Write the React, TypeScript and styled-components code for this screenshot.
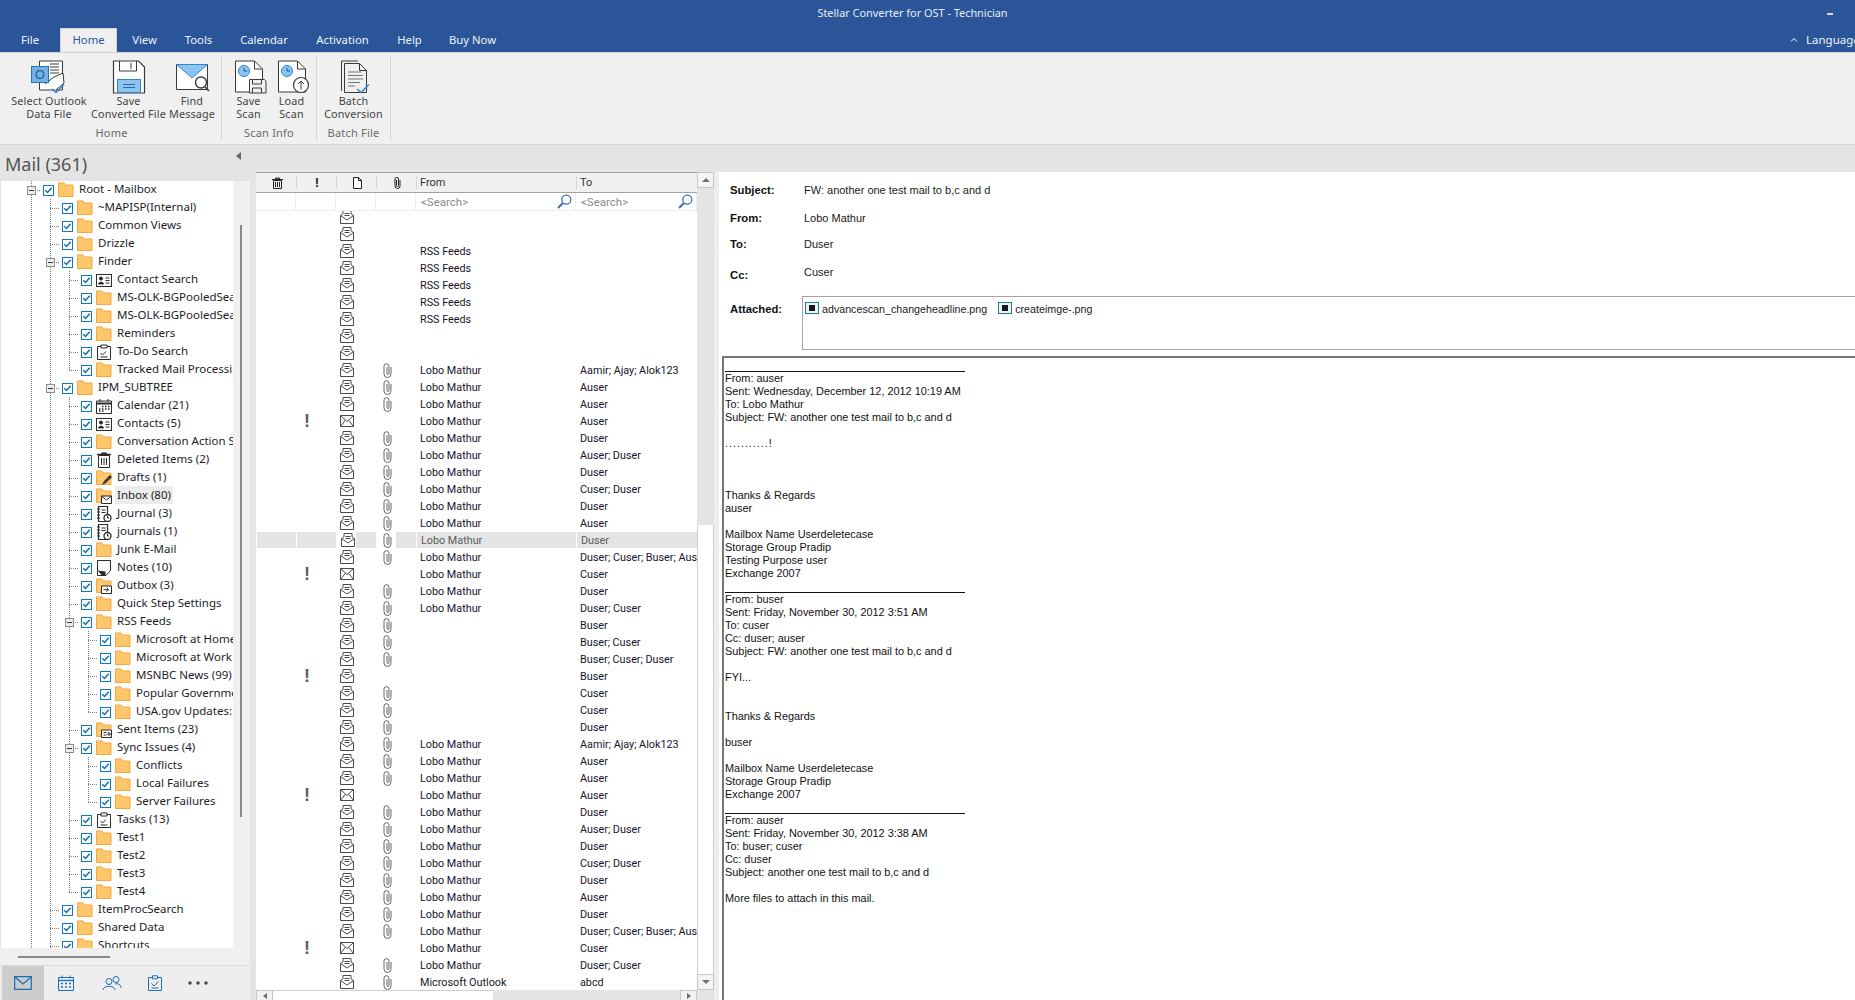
import React from 'react'
import styled, { createGlobalStyle } from 'styled-components'

const UI = `"Noto Sans", "Liberation Sans", sans-serif`
const GRID = `Roboto, "Liberation Sans", sans-serif`
const MSG = `"Liberation Sans", Arial, sans-serif`
const DOTS = '#7d7d7d'

const Global = createGlobalStyle`
  html, body { margin: 0; padding: 0; height: 100%; overflow: hidden; background: #e4e4e4; }
  #root { height: 100%; }
  * { box-sizing: border-box; }
`

const Shell = styled.div`
  display: flex;
  flex-direction: column;
  width: 1855px;
  height: 1000px;
  overflow: hidden;
  font-family: ${UI};
  font-size: 11.5px;
  color: #222;
`

const TitleBar = styled.div`
  position: relative;
  display: flex;
  align-items: center;
  justify-content: center;
  height: 28px;
  padding: 0 30px 3px 0;
  background: #2a5699;
  color: #e6ecf5;
  font-size: 10.9px;
`
const MinimizeGlyph = styled.span`
  position: absolute;
  right: 22px;
  top: 13px;
  width: 6px;
  height: 2px;
  background: #d5dbe6;
`

const TabBar = styled.div`
  position: relative;
  display: flex;
  height: 24px;
  background: #2a5699;
`
const Tab = styled.div<{ $w: number; $on?: boolean }>`
  width: ${p => p.$w}px;
  text-align: center;
  line-height: 24px;
  font-size: 11.3px;
  color: ${p => (p.$on ? '#2a5699' : '#eef2f8')};
  background: ${p => (p.$on ? '#f0f0f0' : 'transparent')};
  ${p => p.$on && 'border: 1px solid #d4d4d4; border-bottom: 0; line-height: 22px;'}
`
const LanguageBox = styled.div`
  position: absolute;
  left: 1790px;
  top: 0;
  display: flex;
  align-items: center;
  gap: 8px;
  height: 22px;
  color: #eef2f8;
  white-space: nowrap;
  font-size: 11.5px;
`

const Ribbon = styled.div`
  display: flex;
  height: 93px;
  flex: none;
  padding: 3px 0 3px 2px;
  background: #f0f0f0;
  border-top: 1px solid #d0d0d0;
  border-bottom: 1px solid #d4d4d4;
`
const RibbonGroup = styled.div<{ $w: number }>`
  display: flex;
  flex-direction: column;
  width: ${p => p.$w}px;
  border-right: 1px solid #d6d6d6;
`
const RibbonButtons = styled.div`
  display: flex;
  flex: 1;
`
const RibbonButton = styled.div<{ $w: number }>`
  display: flex;
  flex-direction: column;
  align-items: center;
  flex: none;
  width: ${p => p.$w}px;
  padding-top: 4px;
  line-height: 13px;
  font-size: 10.8px;
  letter-spacing: 0.15px;
  color: #444;
  text-align: center;
  white-space: nowrap;
`
const RibbonIcon = styled.svg`
  display: block;
  flex: none;
  width: 36px;
  height: 34px;
`
const GroupLabel = styled.div`
  height: 17px;
  padding-top: 1px;
  text-align: center;
  font-size: 11px;
  letter-spacing: 0.2px;
  color: #6a6a6a;
`

const Main = styled.div`
  display: grid;
  grid-template-columns: 250px 6px 463px 1fr;
  flex: 1;
  min-height: 0;
  background: #e4e4e4;
`

const LeftPane = styled.div`
  display: flex;
  flex-direction: column;
  min-height: 0;
`
const MailHeader = styled.div`
  position: relative;
  flex: none;
  height: 36px;
  padding-left: 5px;
  line-height: 38px;
  font-size: 18px;
  color: #555;
`
const CollapseArrow = styled.span`
  position: absolute;
  left: 236px;
  top: 7px;
  width: 0;
  height: 0;
  border-style: solid;
  border-width: 4px 5px 4px 0;
  border-color: transparent #666 transparent transparent;
`
const TreeArea = styled.div`
  display: flex;
  flex: 1;
  min-height: 0;
  padding-left: 1px;
`
const Tree = styled.div`
  flex: none;
  width: 232px;
  overflow: hidden;
  background: #fff;
`
const TreeScroll = styled.div`
  flex: 1;
  display: flex;
  justify-content: center;
  background: #f0f0f0;
  padding-right: 2px;
`
const TreeThumb = styled.div`
  width: 2px;
  height: 592px;
  margin-top: 44px;
  background: #8a8a8a;
`
const TreeHScroll = styled.div`
  flex: none;
  display: flex;
  align-items: center;
  height: 17px;
  padding-left: 18px;
  background: #f0f0f0;
`
const TreeHThumb = styled.div`
  width: 92px;
  height: 2px;
  background: #8a8a8a;
`
const NavBar = styled.div`
  flex: none;
  display: flex;
  height: 35px;
  padding-left: 2px;
  background: #eeeeee;
  border-top: 1px solid #dadada;
`
const NavItem = styled.div<{ $w: number; $on?: boolean }>`
  display: flex;
  align-items: center;
  justify-content: center;
  width: ${p => p.$w}px;
  background: ${p => (p.$on ? '#cccccc' : 'transparent')};
`

const TreeRowBox = styled.div`
  display: flex;
  align-items: center;
  height: 18px;
  padding-left: 21px;
  white-space: nowrap;
`
const Guide = styled.span<{ $kind: 'line' | 'mid' | 'end' }>`
  display: flex;
  align-items: center;
  justify-content: center;
  flex: none;
  width: 19px;
  height: 18px;
  background-repeat: no-repeat;
  background-image:
    repeating-linear-gradient(to bottom, ${DOTS} 0 1px, transparent 1px 2px)
    ${p => (p.$kind === 'line' ? '' : `, repeating-linear-gradient(to right, ${DOTS} 0 1px, transparent 1px 2px)`)};
  background-size: 1px ${p => (p.$kind === 'end' ? '9px' : '18px')} ${p => (p.$kind === 'line' ? '' : ', 10px 1px')};
  background-position: 9px 0 ${p => (p.$kind === 'line' ? '' : ', 9px 9px')};
`
const Expander = styled.span`
  display: flex;
  align-items: center;
  justify-content: center;
  width: 9px;
  height: 9px;
  background: #ececec;
  border: 1px solid #8d8d8d;
  &::before {
    content: '';
    width: 5px;
    height: 1px;
    background: #333;
  }
`
const CheckBox = styled.span`
  display: flex;
  flex: none;
  width: 11px;
  height: 11px;
  margin: 0 4px 0 2px;
  background: #fff;
  border: 1px solid #0f78c2;
`
const TreeIconSvg = styled.svg`
  display: block;
  flex: none;
  width: 16px;
  height: 16px;
`
const TreeLabel = styled.span<{ $on?: boolean }>`
  margin: -2px 0 0 3px;
  padding: 0 2px;
  line-height: 18px;
  font-size: 11.5px;
  color: #1c1c28;
  background: ${p => (p.$on ? '#ececec' : 'transparent')};
`

const MiddleColumn = styled.div`
  display: flex;
  flex-direction: column;
  margin-top: 27px;
  padding-right: 5px;
  min-height: 0;
  background: #eeeeee;
`
const ListTop = styled.div`
  display: flex;
  flex: 1;
  min-height: 0;
`
const List = styled.div`
  display: flex;
  flex-direction: column;
  flex: none;
  width: 441px;
  background: #fff;
  font-family: ${GRID};
`
const Columns = `grid-template-columns: 40px 40px 40px 40px 160px 121px;`
const HeaderRow = styled.div`
  display: grid;
  ${Columns}
  flex: none;
  height: 21px;
  background: #f0f0f0;
  border-top: 1px solid #a3a3a3;
  border-bottom: 1px solid #a3a3a3;
`
const HeaderCell = styled.div<{ $text?: boolean }>`
  display: flex;
  align-items: center;
  justify-content: ${p => (p.$text ? 'flex-start' : 'center')};
  height: 19px;
  padding: ${p => (p.$text ? '0 0 0 4px' : '0 0 0 2px')};
  font-size: 11px;
  color: #333;
  & + & {
    background: linear-gradient(#d6d6d6, #d6d6d6) no-repeat 0 3px / 1px 13px;
  }
`
const HeaderBang = styled.span`
  font-family: ${MSG};
  font-weight: bold;
  font-size: 13px;
  color: #222;
`
const SearchRow = styled.div`
  display: grid;
  ${Columns}
  flex: none;
  height: 18px;
  border-bottom: 1px solid #ededed;
`
const SearchCell = styled.div`
  display: flex;
  align-items: center;
  justify-content: space-between;
  padding: 0 3px 0 5px;
  font-size: 11.5px;
  color: #8b8b8b;
  border-right: 1px solid #ededed;
`
const Rows = styled.div`
  flex: 1;
  min-height: 0;
  overflow: hidden;
`
const RowsInner = styled.div`
  margin-top: -2px;
`
const Row = styled.div<{ $on?: boolean }>`
  display: grid;
  ${Columns}
  height: 17px;
  line-height: 17px;
  font-size: 10.8px;
  color: ${p => (p.$on ? '#5a5a5a' : '#14142a')};
`
const Cell = styled.div<{ $on?: boolean; $text?: boolean; $icon?: boolean }>`
  display: flex;
  align-items: center;
  justify-content: center;
  height: 16px;
  overflow: hidden;
  white-space: nowrap;
  ${p => p.$text && 'justify-content: flex-start; padding-left: 4px;'}
  ${p => !p.$text && 'padding-right: 18px;'}
  ${p => p.$on && 'background: #e4e4e4; border-left: 1px solid #fff;'}
  ${p => p.$on && p.$icon && 'background: linear-gradient(#fff, #fff) no-repeat 0 0 / 19px 100%, #e4e4e4;'}
`
const Bang = styled.span`
  font-family: ${MSG};
  font-weight: bold;
  font-size: 18px;
  line-height: 16px;
  color: #5c5c5c;
`

const VScroll = styled.div`
  display: flex;
  flex-direction: column;
  flex: none;
  width: 17px;
  background: #e4e4e4;
`
const ScrollButton = styled.div`
  display: flex;
  align-items: center;
  justify-content: center;
  flex: none;
  width: 17px;
  height: 16px;
  background: #f4f4f4;
  border: 1px solid #c6c6c6;
`
const ArrowUp = styled.span`
  border-style: solid;
  border-width: 0 4px 4px 4px;
  border-color: transparent transparent #6e6e6e transparent;
`
const ArrowDown = styled.span`
  border-style: solid;
  border-width: 4px 4px 0 4px;
  border-color: #6e6e6e transparent transparent transparent;
`
const VThumb = styled.div`
  flex: 1;
  margin-top: 337px;
  background: #fff;
  border-left: 1px solid #cfcfcf;
  border-right: 1px solid #cfcfcf;
`
const Spacer = styled.div`
  flex: 1;
`
const HScroll = styled.div`
  display: flex;
  flex: none;
  width: 458px;
  height: 10px;
  padding-right: 17px;
  background: #e4e4e4;
  overflow: hidden;
`
const HButton = styled.div`
  display: flex;
  align-items: center;
  justify-content: center;
  flex: none;
  width: 17px;
  height: 10px;
  background: #f2f2f2;
  border: 1px solid #c6c6c6;
  border-bottom: 0;
`
const ArrowLeft = styled.span`
  border-style: solid;
  border-width: 3px 4px 3px 0;
  border-color: transparent #6e6e6e transparent transparent;
`
const ArrowRight = styled.span`
  border-style: solid;
  border-width: 3px 0 3px 4px;
  border-color: transparent transparent transparent #6e6e6e;
`
const HThumb = styled.div`
  flex: none;
  width: 220px;
  background: #fff;
  border-top: 1px solid #cfcfcf;
`

const RightPane = styled.div`
  display: flex;
  flex-direction: column;
  min-width: 0;
  margin-top: 27px;
  overflow: hidden;
  background: #fff;
  font-family: ${MSG};
  font-size: 11px;
  color: #1a1a1a;
`
const MetaRow = styled.div<{ $h: number }>`
  display: flex;
  align-items: center;
  flex: none;
  height: ${p => p.$h}px;
  padding-left: 11px;
`
const MetaLabel = styled.div<{ $low?: boolean }>`
  flex: none;
  width: 74px;
  font-weight: bold;
  font-size: 11.3px;
  color: #111;
  ${p => p.$low && 'padding-top: 6px;'}
`
const AttachRow = styled.div`
  display: flex;
  flex: none;
  height: 54px;
  margin: 12px -10px 0 0;
  padding-left: 11px;
`
const AttachLabel = styled(MetaLabel)`
  width: 72px;
  padding-top: 7px;
`
const AttachBox = styled.div`
  display: flex;
  flex: 1;
  gap: 11px;
  padding: 4px 0 0 2px;
  border: 1px solid #a3a3a3;
`
const Attachment = styled.div`
  display: flex;
  align-items: flex-start;
  gap: 3px;
  height: 16px;
  line-height: 16px;
  font-size: 10.7px;
`
const FileIcon = styled.span`
  display: flex;
  align-items: center;
  justify-content: center;
  flex: none;
  width: 14px;
  height: 12px;
  margin-top: 1px;
  background: #eaf3f3;
  border: 1px solid #1f7f83;
  &::before {
    content: '';
    width: 6px;
    height: 6px;
    background: #1b1320;
  }
`
const Preview = styled.div`
  flex: 1;
  margin: 6px -10px 0 3px;
  padding: 1px 0 0 1px;
  min-height: 0;
  overflow: hidden;
  border-top: 2px solid #777;
  border-left: 2px solid #777;
`
const MailRule = styled.div`
  width: 240px;
  height: 13px;
  border-bottom: 1px solid #111;
`
const MailText = styled.div`
  white-space: pre-line;
  line-height: 13px;
  font-size: 10.9px;
  color: #111;
`
const LooseDots = styled.span`
  letter-spacing: 0.95px;
`

type IconKind =
  | 'folder' | 'contact' | 'todo' | 'calendar' | 'trash' | 'drafts'
  | 'inbox' | 'journal' | 'note' | 'outbox' | 'sent'

const folderPath = 'M.5 3.5V.9h5.3l2 2.1h7.2v11.5H.5z'
const FolderShape = () => <path d={folderPath} fill="#fec76b" stroke="#f4a63f" />

const TreeIcon = ({ kind }: { kind: IconKind }) => {
  const k = '#2b2b2b'
  return (
    <TreeIconSvg viewBox="0 0 16 16">
      {kind === 'folder' && <FolderShape />}
      {kind === 'contact' && (
        <g fill="none" stroke={k}>
          <rect x=".5" y="2.5" width="15" height="12" />
          <circle cx="5" cy="6.5" r="1.6" fill={k} />
          <path d="M2.5 12c0-2.4 5-2.4 5 0z" fill={k} />
          <path d="M9.5 6h4M9.5 8.5h4M9.5 11h4" />
        </g>
      )}
      {kind === 'todo' && (
        <g fill="none" stroke={k}>
          <path d="M1.5 2.5h13v13h-13z" />
          <path d="M5 1h6v3H5z" fill="#fff" />
          <path d="M4.5 9l2 2 3.5-3.5M4.5 13h7" />
        </g>
      )}
      {kind === 'calendar' && (
        <g fill="none" stroke={k}>
          <path d="M.5 3h15v12.5H.5z" />
          <path d="M.5 5.5h15" strokeWidth="2" />
          <path d="M4 1v3M12 1v3" />
          <path d="M6 8.5h1.5M9 8.5h1.500M12 8.500h1.500M3 11h1.500M6 11h1.500M9 11h1.500M12 11h1.500M3 13h1.500M6 13h1.500" strokeWidth="1.400" />
        </g>
      )}
      {kind === 'trash' && (
        <g fill="none" stroke={k}>
          <path d="M2.500 3.500h11v12h-11z" />
          <path d="M1 2.500h14" strokeWidth="1.400" />
          <path d="M5.500 1h5v1.500h-5z" fill={k} />
          <path d="M5.500 6v7M8 6v7M10.500 6v7" />
        </g>
      )}
      {kind === 'drafts' && (
        <g>
          <FolderShape />
          <path d="M6 15l2-4 6-6 2 2-6 6z" fill="#3a3a3a" />
        </g>
      )}
      {kind === 'inbox' && (
        <g>
          <FolderShape />
          <path d="M5.500 8h10v7.500h-10z" fill="#fff" stroke={k} />
          <path d="M5.500 8l5 4 5-4" fill="none" stroke={k} />
        </g>
      )}
      {kind === 'journal' && (
        <g fill="none" stroke={k}>
          <path d="M2.500 .5h9v15h-9z" strokeWidth="1.200" />
          <path d="M1 3h3M1 6h3M1 9h3M1 12h3M5.500 4h4M5.500 6.500h4" />
          <circle cx="11.500" cy="12" r="3.500" fill="#fff" strokeWidth="1.300" />
          <path d="M11.500 10v2h1.500" />
        </g>
      )}
      {kind === 'note' && (
        <g>
          <path d="M1.500 .5h13v10l-4.500 5H1.500z" fill="#fff" stroke={k} />
          <path d="M1.500 10.500l8 1v4H6z" fill="#2b2b2b" />
        </g>
      )}
      {kind === 'outbox' && (
        <g>
          <FolderShape />
          <path d="M5.500 8h10v7.500h-10z" fill="#fff" stroke={k} />
          <path d="M7.500 11.700h5M10.500 9.700l2 2-2 2" fill="none" stroke={k} />
        </g>
      )}
      {kind === 'sent' && (
        <g>
          <FolderShape />
          <path d="M5.500 8h10v7.500h-10z" fill="#fff" stroke={k} />
          <path d="M7.500 10.500h3M7.500 13h3M12 11h2v2h-2z" fill="none" stroke={k} />
        </g>
      )}
    </TreeIconSvg>
  )
}

type TreeItem = {
  label: string
  depth: number
  icon?: IconKind
  exp?: boolean
  last?: boolean
  on?: boolean
}

const treeItems: TreeItem[] = [
  { label: 'Root - Mailbox', depth: 0, exp: true },
  { label: '~MAPISP(Internal)', depth: 1 },
  { label: 'Common Views', depth: 1 },
  { label: 'Drizzle', depth: 1 },
  { label: 'Finder', depth: 1, exp: true },
  { label: 'Contact Search', depth: 2, icon: 'contact' },
  { label: 'MS-OLK-BGPooledSearch', depth: 2 },
  { label: 'MS-OLK-BGPooledSearch', depth: 2 },
  { label: 'Reminders', depth: 2 },
  { label: 'To-Do Search', depth: 2, icon: 'todo' },
  { label: 'Tracked Mail Processing', depth: 2, last: true },
  { label: 'IPM_SUBTREE', depth: 1, exp: true },
  { label: 'Calendar (21)', depth: 2, icon: 'calendar' },
  { label: 'Contacts (5)', depth: 2, icon: 'contact' },
  { label: 'Conversation Action Settings', depth: 2 },
  { label: 'Deleted Items (2)', depth: 2, icon: 'trash' },
  { label: 'Drafts (1)', depth: 2, icon: 'drafts' },
  { label: 'Inbox (80)', depth: 2, icon: 'inbox', on: true },
  { label: 'Journal (3)', depth: 2, icon: 'journal' },
  { label: 'journals (1)', depth: 2, icon: 'journal' },
  { label: 'Junk E-Mail', depth: 2 },
  { label: 'Notes (10)', depth: 2, icon: 'note' },
  { label: 'Outbox (3)', depth: 2, icon: 'outbox' },
  { label: 'Quick Step Settings', depth: 2 },
  { label: 'RSS Feeds', depth: 2, exp: true },
  { label: 'Microsoft at Home', depth: 3 },
  { label: 'Microsoft at Work', depth: 3 },
  { label: 'MSNBC News (99)', depth: 3 },
  { label: 'Popular Government', depth: 3 },
  { label: 'USA.gov Updates:', depth: 3, last: true },
  { label: 'Sent Items (23)', depth: 2, icon: 'sent' },
  { label: 'Sync Issues (4)', depth: 2, exp: true },
  { label: 'Conflicts', depth: 3 },
  { label: 'Local Failures', depth: 3 },
  { label: 'Server Failures', depth: 3, last: true },
  { label: 'Tasks (13)', depth: 2, icon: 'todo' },
  { label: 'Test1', depth: 2 },
  { label: 'Test2', depth: 2 },
  { label: 'Test3', depth: 2 },
  { label: 'Test4', depth: 2, last: true },
  { label: 'ItemProcSearch', depth: 1 },
  { label: 'Shared Data', depth: 1 },
  { label: 'Shortcuts', depth: 1 },
]

const TreeRow = ({ item }: { item: TreeItem }) => (
  <TreeRowBox>
    {Array.from({ length: item.depth }, (_, i) => (
      <Guide key={i} $kind="line" />
    ))}
    <Guide $kind={item.last ? 'end' : 'mid'}>{item.exp && <Expander />}</Guide>
    <CheckBox>
      <svg viewBox="0 0 9 9" width="9" height="9">
        <path d="M1.300 4.300l2.200 2.200 4.200-4.700" fill="none" stroke="#0f6db5" strokeWidth="1.500" />
      </svg>
    </CheckBox>
    <TreeIcon kind={item.icon ?? 'folder'} />
    <TreeLabel $on={item.on}>{item.label}</TreeLabel>
  </TreeRowBox>
)

type MailRow = { from?: string; to?: string; clip?: boolean; bang?: boolean; closed?: boolean; on?: boolean }

const L = 'Lobo Mathur'
const mailRows: MailRow[] = [
  {}, {},
  { from: 'RSS Feeds' }, { from: 'RSS Feeds' }, { from: 'RSS Feeds' }, { from: 'RSS Feeds' }, { from: 'RSS Feeds' },
  {}, {},
  { from: L, to: 'Aamir; Ajay; Alok123', clip: true },
  { from: L, to: 'Auser', clip: true },
  { from: L, to: 'Auser', clip: true },
  { from: L, to: 'Auser', bang: true, closed: true },
  { from: L, to: 'Duser', clip: true },
  { from: L, to: 'Auser; Duser', clip: true },
  { from: L, to: 'Duser', clip: true },
  { from: L, to: 'Cuser; Duser', clip: true },
  { from: L, to: 'Duser', clip: true },
  { from: L, to: 'Auser', clip: true },
  { from: L, to: 'Duser', clip: true, on: true },
  { from: L, to: 'Duser; Cuser; Buser; Auser', clip: true },
  { from: L, to: 'Cuser', bang: true, closed: true },
  { from: L, to: 'Duser', clip: true },
  { from: L, to: 'Duser; Cuser', clip: true },
  { to: 'Buser', clip: true },
  { to: 'Buser; Cuser', clip: true },
  { to: 'Buser; Cuser; Duser', clip: true },
  { to: 'Buser', bang: true },
  { to: 'Cuser', clip: true },
  { to: 'Cuser', clip: true },
  { to: 'Duser', clip: true },
  { from: L, to: 'Aamir; Ajay; Alok123', clip: true },
  { from: L, to: 'Auser', clip: true },
  { from: L, to: 'Auser', clip: true },
  { from: L, to: 'Auser', bang: true, closed: true },
  { from: L, to: 'Duser', clip: true },
  { from: L, to: 'Auser; Duser', clip: true },
  { from: L, to: 'Duser', clip: true },
  { from: L, to: 'Cuser; Duser', clip: true },
  { from: L, to: 'Duser', clip: true },
  { from: L, to: 'Auser', clip: true },
  { from: L, to: 'Duser', clip: true },
  { from: L, to: 'Duser; Cuser; Buser; Auser', clip: true },
  { from: L, to: 'Cuser', bang: true, closed: true },
  { from: L, to: 'Duser; Cuser', clip: true },
  { from: 'Microsoft Outlook', to: 'abcd', clip: true },
]

const OpenMail = () => (
  <svg viewBox="0 0 14 14" width="14" height="14" fill="none" stroke="#4a4a4a">
    <path d="M.5 5.500L3 3.800V.5h8v3.300l2.500 1.700v8H.5z" fill="#fff" />
    <path d="M.5 5.500L7 10l6.500-4.500M4.500 3.500h5M4.500 5.500h5" />
  </svg>
)
const ClosedMail = () => (
  <svg viewBox="0 0 14 14" width="14" height="14" fill="none" stroke="#4a4a4a">
    <path d="M.5 1.500h13v11H.5z" />
    <path d="M.5 1.500L7 7.500l6.500-6M.5 12.500L5.300 6.300M13.500 12.500L8.700 6.300" />
  </svg>
)
const Clip = () => (
  <svg viewBox="0 0 9 15" width="9" height="15" fill="none" stroke="#666">
    <path d="M8 4v6.800a3.500 3.700 0 0 1-7 0V3.200a2.500 2.500 0 0 1 5 0v7.300a1 1 0 0 1-2 0V4" />
  </svg>
)
const SearchGlass = () => (
  <svg viewBox="0 0 15 15" width="15" height="15" fill="none" stroke="#3f6fb3" strokeWidth="1.300">
    <circle cx="9.300" cy="5.700" r="4.500" />
    <path d="M6 9L1 14" strokeWidth="2" />
  </svg>
)

const MailRowView = ({ row }: { row: MailRow }) => (
  <Row $on={row.on}>
    <Cell $on={row.on} />
    <Cell $on={row.on}>{row.bang && <Bang>!</Bang>}</Cell>
    <Cell $on={row.on} $icon>{row.closed ? <ClosedMail /> : <OpenMail />}</Cell>
    <Cell $on={row.on} $icon>{row.clip && <Clip />}</Cell>
    <Cell $on={row.on} $text>{row.from}</Cell>
    <Cell $on={row.on} $text>{row.to}</Cell>
  </Row>
)

const mailOneHead = `From: auser
Sent: Wednesday, December 12, 2012 10:19 AM
To: Lobo Mathur
Subject: FW: another one test mail to b,c and d
\u00a0`

const mailOneTail = `\u00a0
\u00a0
\u00a0
Thanks & Regards
auser
\u00a0
Mailbox Name Userdeletecase
Storage Group Pradip
Testing Purpose user
Exchange 2007`

const mailTwo = `From: buser
Sent: Friday, November 30, 2012 3:51 AM
To: cuser
Cc: duser; auser
Subject: FW: another one test mail to b,c and d
\u00a0
FYI...
\u00a0
\u00a0
Thanks & Regards
\u00a0
buser
\u00a0
Mailbox Name Userdeletecase
Storage Group Pradip
Exchange 2007`

const mailThree = `From: auser
Sent: Friday, November 30, 2012 3:38 AM
To: buser; cuser
Cc: duser
Subject: another one test mail to b,c and d
\u00a0
More files to attach in this mail.`

const ink = '#3a3a3a'
const sky = '#8cc4ee'
const blue = '#2f86d0'

export default function App() {
  return (
    <Shell>
      <Global />
      <TitleBar>
        Stellar Converter for OST - Technician
        <MinimizeGlyph />
      </TitleBar>
      <TabBar>
        <Tab $w={60}>File</Tab>
        <Tab $w={57} $on>Home</Tab>
        <Tab $w={55}>View</Tab>
        <Tab $w={53}>Tools</Tab>
        <Tab $w={78}>Calendar</Tab>
        <Tab $w={79}>Activation</Tab>
        <Tab $w={55}>Help</Tab>
        <Tab $w={71}>Buy Now</Tab>
        <LanguageBox>
          <svg viewBox="0 0 8 5" width="8" height="5" fill="none" stroke="#fff">
            <path d="M1 4.500L4 1.500l3 3" />
          </svg>
          Language
        </LanguageBox>
      </TabBar>

      <Ribbon>
        <RibbonGroup $w={220}>
          <RibbonButtons>
            <RibbonButton $w={94}>
              <RibbonIcon viewBox="0 0 36 34">
                <path d="M8.500 12V1h23v29H8.500z" fill="#fff" stroke={ink} />
                <path d="M19 4h9M19 7h9M19 10h9M19 13h9" stroke={ink} />
                <path d="M14 24l9-7 9-4 1 10-8 7" fill="#fff" stroke={ink} />
                <rect x=".5" y="6.500" width="17" height="16" fill="#77b1e3" stroke="#1f76bf" />
                <text x="9" y="19" fontFamily={UI} fontSize="13" textAnchor="middle" fill="#0f5c9e">O</text>
                <path d="M21 29l4 3.500 8-8" fill="none" stroke={blue} strokeWidth="1.400" />
              </RibbonIcon>
              Select Outlook<br />Data File
            </RibbonButton>
            <RibbonButton $w={65}>
              <RibbonIcon viewBox="0 0 36 34">
                <path d="M2.500 1h25l6 6v26h-31z" fill="#fff" stroke={ink} strokeWidth="1.200" />
                <path d="M8.500 1v10h17V1M20 3v6" fill="none" stroke={ink} />
                <rect x="6.500" y="19.500" width="23" height="13" fill={sky} stroke={blue} />
                <path d="M12 24.500h12M12 27.500h12" stroke="#2a6ea8" />
              </RibbonIcon>
              Save<br />Converted File
            </RibbonButton>
            <RibbonButton $w={62}>
              <RibbonIcon viewBox="0 0 36 34">
                <path d="M2.500 4.500h31v25h-31z" fill="#fff" stroke={ink} />
                <path d="M2.500 4.500h31L18 18z" fill={sky} stroke={blue} />
                <circle cx="27" cy="22.500" r="5.500" fill="#fff" stroke={ink} strokeWidth="1.400" />
                <path d="M31 27l4 4" stroke={ink} strokeWidth="1.600" />
              </RibbonIcon>
              Find<br />Message
            </RibbonButton>
          </RibbonButtons>
          <GroupLabel>Home</GroupLabel>
        </RibbonGroup>
        <RibbonGroup $w={95}>
          <RibbonButtons>
            <RibbonButton $w={53}>
              <RibbonIcon viewBox="0 0 36 34">
                <path d="M4.500 1h19l8 8v23h-27z" fill="#fff" stroke={ink} />
                <path d="M23.500 1v8h8" fill="none" stroke={ink} />
                <circle cx="13" cy="11" r="5.500" fill={sky} stroke={blue} />
                <path d="M13 8v3h3" fill="none" stroke="#14578f" />
                <path d="M18.500 19.500h15l1.500 1.500v12h-16.500z" fill="#f0f0f0" stroke={ink} />
                <path d="M21.500 20v4h9v-4M21.500 33v-5h9v5" fill="none" stroke={ink} />
              </RibbonIcon>
              Save<br />Scan
            </RibbonButton>
            <RibbonButton $w={33}>
              <RibbonIcon viewBox="0 0 36 34">
                <path d="M4.500 1h19l8 8v23h-27z" fill="#fff" stroke={ink} />
                <path d="M23.500 1v8h8" fill="none" stroke={ink} />
                <circle cx="13" cy="11" r="5.500" fill={sky} stroke={blue} />
                <path d="M13 8v3h3" fill="none" stroke="#14578f" />
                <circle cx="27" cy="25" r="7.500" fill="#fff" stroke={ink} strokeWidth="1.200" />
                <path d="M27 29.500v-8M24 24l3-3 3 3" fill="none" stroke={ink} />
              </RibbonIcon>
              Load<br />Scan
            </RibbonButton>
          </RibbonButtons>
          <GroupLabel>Scan Info</GroupLabel>
        </RibbonGroup>
        <RibbonGroup $w={74}>
          <RibbonButtons>
            <RibbonButton $w={73}>
              <RibbonIcon viewBox="0 0 36 34">
                <path d="M5.500 31V1H22" fill="none" stroke={ink} />
                <path d="M8.500 3.500h15l7 7v22h-22z" fill="#f0f0f0" stroke={ink} />
                <path d="M23.500 3.500v7h7" fill="none" stroke={ink} />
                <path d="M12 12h13M12 15.500h15M12 19h15M12 22.500h12M12 26h7" stroke="#777" />
                <path d="M21 29l4 3.500 8-8" fill="none" stroke={blue} strokeWidth="1.500" />
              </RibbonIcon>
              Batch<br />Conversion
            </RibbonButton>
          </RibbonButtons>
          <GroupLabel>Batch File</GroupLabel>
        </RibbonGroup>
      </Ribbon>

      <Main>
        <LeftPane>
          <MailHeader>
            Mail (361)
            <CollapseArrow />
          </MailHeader>
          <TreeArea>
            <Tree>
              {treeItems.map((item, i) => (
                <TreeRow key={i} item={item} />
              ))}
            </Tree>
            <TreeScroll>
              <TreeThumb />
            </TreeScroll>
          </TreeArea>
          <TreeHScroll>
            <TreeHThumb />
          </TreeHScroll>
          <NavBar>
            <NavItem $w={42} $on>
              <svg viewBox="0 0 18 14" width="18" height="14" fill="none" stroke="#1c6db3" strokeWidth="1.200">
                <path d="M.7.7h16.600v12.600H.7z" />
                <path d="M.7.7L9 8l8.300-7.300" />
              </svg>
            </NavItem>
            <NavItem $w={44}>
              <svg viewBox="0 0 16 16" width="16" height="16" fill="none" stroke="#1c6db3">
                <path d="M.5 2.500h15v13H.5z" />
                <path d="M.5 5.500h15" strokeWidth="1.400" />
                <path d="M4 .5v3M12 .5v3" />
                <path d="M3 8.500h2M7 8.500h2M11 8.500h2M3 12h2M7 12h2M11 12h2" strokeWidth="1.600" />
              </svg>
            </NavItem>
            <NavItem $w={48}>
              <svg viewBox="0 0 20 15" width="20" height="15" fill="none" stroke="#1c6db3">
                <circle cx="7" cy="5.500" r="3" />
                <path d="M1 14c0-5 12-5 12 0" />
                <circle cx="14" cy="3.500" r="3" />
                <path d="M13 8c3-1 6 .5 6 4" />
              </svg>
            </NavItem>
            <NavItem $w={38}>
              <svg viewBox="0 0 14 16" width="14" height="16" fill="none" stroke="#1c6db3">
                <path d="M.5 2.500h13v13H.5z" />
                <path d="M4.500.8h5v3h-5z" fill="#eee" />
                <path d="M3.500 8.500l2.500 2.500 4.500-4.500M3.500 13h7" />
              </svg>
            </NavItem>
            <NavItem $w={48}>
              <svg viewBox="0 0 20 4" width="20" height="4" fill="#4f4f4f">
                <circle cx="2" cy="2" r="1.800" />
                <circle cx="10" cy="2" r="1.800" />
                <circle cx="18" cy="2" r="1.800" />
              </svg>
            </NavItem>
          </NavBar>
        </LeftPane>

        <div />

        <MiddleColumn>
          <ListTop>
            <List>
              <HeaderRow>
                <HeaderCell>
                  <svg viewBox="0 0 11 12" width="11" height="12" fill="none" stroke="#222">
                    <path d="M1.500 3.500h8v8h-8z" />
                    <path d="M0 2.500h11M3.500 1h4v1h-4z" />
                    <path d="M3.500 5v5M5.500 5v5M7.500 5v5" />
                  </svg>
                </HeaderCell>
                <HeaderCell><HeaderBang>!</HeaderBang></HeaderCell>
                <HeaderCell>
                  <svg viewBox="0 0 9 12" width="9" height="12" fill="#fff" stroke="#222">
                    <path d="M.5.5h5l3 3v8h-8zM5.500.5v3h3" />
                  </svg>
                </HeaderCell>
                <HeaderCell>
                  <svg viewBox="0 0 7 12" width="7" height="12" fill="none" stroke="#222">
                    <path d="M2.500 3v5.500a1 1 0 0 0 2 0V2a1.500 1.500 0 0 0-3.500 0v7a2.500 2.500 0 0 0 5 0V3" />
                  </svg>
                </HeaderCell>
                <HeaderCell $text>From</HeaderCell>
                <HeaderCell $text>To</HeaderCell>
              </HeaderRow>
              <SearchRow>
                <SearchCell />
                <SearchCell />
                <SearchCell />
                <SearchCell />
                <SearchCell>&lt;Search&gt;<SearchGlass /></SearchCell>
                <SearchCell>&lt;Search&gt;<SearchGlass /></SearchCell>
              </SearchRow>
              <Rows>
                <RowsInner>
                  {mailRows.map((row, i) => (
                    <MailRowView key={i} row={row} />
                  ))}
                </RowsInner>
              </Rows>
            </List>
            <VScroll>
              <ScrollButton><ArrowUp /></ScrollButton>
              <VThumb />
              <ScrollButton><ArrowDown /></ScrollButton>
            </VScroll>
          </ListTop>
          <HScroll>
            <HButton><ArrowLeft /></HButton>
            <HThumb />
            <Spacer />
            <HButton><ArrowRight /></HButton>
          </HScroll>
        </MiddleColumn>

        <RightPane>
          <MetaRow $h={36}>
            <MetaLabel>Subject:</MetaLabel>
            FW: another one test mail to b,c and d
          </MetaRow>
          <MetaRow $h={20}>
            <MetaLabel>From:</MetaLabel>
            Lobo Mathur
          </MetaRow>
          <MetaRow $h={32}>
            <MetaLabel>To:</MetaLabel>
            Duser
          </MetaRow>
          <MetaRow $h={24}>
            <MetaLabel $low>Cc:</MetaLabel>
            Cuser
          </MetaRow>
          <AttachRow>
            <AttachLabel>Attached:</AttachLabel>
            <AttachBox>
              <Attachment><FileIcon />advancescan_changeheadline.png</Attachment>
              <Attachment><FileIcon />createimge-.png</Attachment>
            </AttachBox>
          </AttachRow>
          <Preview>
            <MailRule />
            <MailText>{mailOneHead}</MailText>
            <MailText><LooseDots>...........!</LooseDots></MailText>
            <MailText>{mailOneTail}</MailText>
            <MailRule />
            <MailText>{mailTwo}</MailText>
            <MailRule />
            <MailText>{mailThree}</MailText>
          </Preview>
        </RightPane>
      </Main>
    </Shell>
  )
}
